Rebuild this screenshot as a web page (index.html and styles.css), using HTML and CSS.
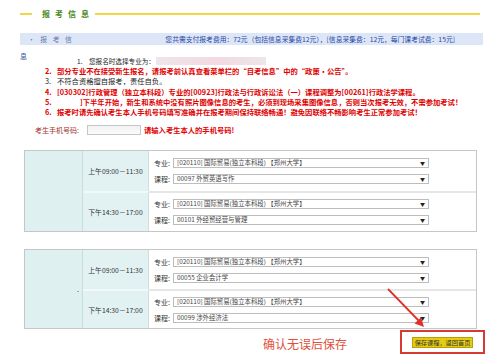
FILE: index.html
```html
<!DOCTYPE html>
<html lang="zh-CN">
<head>
<meta charset="utf-8">
<title>报考信息</title>
<link rel="stylesheet" href="styles.css">
</head>
<body>
<div class="page">
  <div class="head">
    <span class="rule short"></span>
    <span class="title">报考信息</span>
    <span class="rule long"></span>
  </div>

  <div class="bar">
    <span class="bar-left">· 报 考 信</span>
    <span class="bar-right">您共需支付报考费用：72元（包括信息采集费12元），[信息采集费：12元，每门课考试费：15元]</span>
  </div>

  <div class="notice">
    <div class="notice-tail">息</div>
    <div class="list">
      <div class="item first"><span class="num">1.</span><span>您报名时选择专业为：</span><span class="blur"></span></div>
      <div class="item red"><span class="num">2.</span><span>部分专业不在接受新生报名，请报考前认真查看菜单栏的“自考信息”中的“政策・公告”。</span></div>
      <div class="item"><span class="num">3.</span><span>不符合资格擅自报考，责任自负。</span></div>
      <div class="item red"><span class="num">4.</span><span>[030302]行政管理（独立本科段）专业的[00923]行政法与行政诉讼法（一）课程调整为[00261]行政法学课程。</span></div>
      <div class="item red"><span class="num">5.</span><span class="gap"></span><span>]下半年开始，新生和系统中没有照片图像信息的考生，必须到现场采集图像信息，否则当次报考无效，不需参加考试！</span></div>
      <div class="item red"><span class="num">6.</span><span>报考时请先确认考生本人手机号码填写准确并在报考期间保持联络畅通！避免因联络不畅影响考生正常参加考试！</span></div>
    </div>
  </div>

  <div class="phone">
    <span class="phone-label">考生手机号码:</span>
    <span class="phone-input"></span>
    <span class="phone-hint">请输入考生本人的手机号码!</span>
  </div>

  <div class="exam">
    <div class="c-blank"></div>
    <div class="c-time">上午09:00－11:30</div>
    <div class="c-pick">
      <div class="pick"><span class="lab">专业:</span><div class="sel"><span>[020110] 国际贸易(独立本科段) 【郑州大学】</span><i>▼</i></div></div>
      <div class="pick"><span class="lab">课程:</span><div class="sel"><span>00097 外贸英语写作</span><i>▼</i></div></div>
    </div>
    <div class="c-time lower">下午14:30－17:00</div>
    <div class="c-pick lower">
      <div class="pick"><span class="lab">专业:</span><div class="sel"><span>[020110] 国际贸易(独立本科段) 【郑州大学】</span><i>▼</i></div></div>
      <div class="pick"><span class="lab">课程:</span><div class="sel"><span>00101 外经贸经营与管理</span><i>▼</i></div></div>
    </div>
  </div>

  <div class="exam second">
    <div class="c-blank"><span class="dot">.</span></div>
    <div class="c-time">上午09:00－11:30</div>
    <div class="c-pick">
      <div class="pick"><span class="lab">专业:</span><div class="sel"><span>[020110] 国际贸易(独立本科段) 【郑州大学】</span><i>▼</i></div></div>
      <div class="pick"><span class="lab">课程:</span><div class="sel"><span>00055 企业会计学</span><i>▼</i></div></div>
    </div>
    <div class="c-time lower">下午14:30－17:00</div>
    <div class="c-pick lower">
      <div class="pick"><span class="lab">专业:</span><div class="sel"><span>[020110] 国际贸易(独立本科段) 【郑州大学】</span><i>▼</i></div></div>
      <div class="pick"><span class="lab">课程:</span><div class="sel"><span>00099 涉外经济法</span><i>▼</i></div></div>
    </div>
  </div>

  <div class="bottom">
    <span class="confirm">确认无误后保存</span>
    <div class="box"><span class="btn">保存课程，返回首页</span></div>
  </div>

  <svg class="arrow" width="500" height="359" viewBox="0 0 500 359">
    <line x1="388" y1="289" x2="419" y2="321" stroke="#e0302a" stroke-width="1.8"/>
    <polygon points="424,327 414.6,323.4 421,317.2" fill="#e0302a"/>
  </svg>
</div>
</body>
</html>
```

FILE: styles.css
```css
* { box-sizing: border-box; }

html, body {
  margin: 0;
  padding: 0;
  background: #ffffff;
}

body {
  font-family: "Noto Sans CJK SC", "Noto Sans", sans-serif;
  font-size: 7px;
  color: #222;
}

.page {
  position: relative;
  width: 500px;
  height: 359px;
  overflow: hidden;
}

/* header */
.head {
  display: flex;
  align-items: center;
  height: 27px;
  padding-left: 20px;
}
.rule {
  height: 2px;
  background: #f1d64c;
}
.short {
  width: 12px;
  margin-right: 10px;
}
.title {
  width: 53px;
  font-size: 8px;
  font-weight: bold;
  letter-spacing: 5px;
  color: #4a8a22;
  line-height: 10px;
}
.long {
  width: 385px;
}

/* blue info bar */
.bar {
  margin: 6px 17px 0 20px;
  height: 12px;
  background: #dde6f7;
  display: flex;
  align-items: center;
  justify-content: space-between;
  padding: 0 28px 0 8px;
  line-height: 12px;
  font-size: 6.8px;
  white-space: nowrap;
}
.bar-left {
  color: #6a7aa6;
  letter-spacing: 2px;
}
.bar-right {
  color: #2547a6;
}

/* notices */
.notice {
  display: flex;
  padding-left: 20px;
}
.notice-tail {
  width: 25px;
  margin-top: 7px;
  line-height: 9px;
  color: #3552a0;
  font-size: 7px;
}
.list {
  padding-top: 11px;
}
.item {
  display: flex;
  align-items: center;
  height: 10.2px;
  line-height: 10.2px;
  font-size: 7.3px;
  white-space: nowrap;
  color: #222;
}
.item.first {
  padding-left: 32px;
  font-size: 6.6px;
}
.num {
  width: 12px;
  flex: none;
}
.red {
  color: #e00000;
  font-weight: bold;
}
.gap {
  width: 23px;
}
.blur {
  width: 110px;
  height: 8px;
  margin-left: 1px;
  background: linear-gradient(90deg, #ede6ea, #f3d9e2 55%, #ebe6ea);
}

/* phone row */
.phone {
  display: flex;
  align-items: center;
  margin-top: 7px;
  height: 11px;
  padding-left: 35px;
  white-space: nowrap;
}
.phone-label {
  width: 52px;
  color: #a3302a;
  font-size: 7px;
}
.phone-input {
  width: 54px;
  height: 10px;
  border: 1px solid #c6c6c6;
  background: linear-gradient(180deg, #f2f2f2, #fafafa);
}
.phone-hint {
  margin-left: 3px;
  color: #e00000;
  font-weight: bold;
  font-size: 7.3px;
}

/* exam tables */
.exam {
  margin: 15px 0 0 24px;
  width: 453px;
  height: 82px;
  border: 1px solid #c6c6c6;
  display: grid;
  grid-template-columns: 58px 66px 1fr;
  grid-template-rows: 1fr 1fr;
}
.exam.second {
  margin-top: 17px;
  height: 80px;
}
.c-blank {
  grid-row: 1 / 3;
  grid-column: 1;
  background: #dff0f1;
  border-right: 1px solid #c8dcdc;
  display: flex;
  align-items: center;
  justify-content: flex-end;
  padding-right: 3px;
}
.dot {
  font-size: 7px;
  line-height: 7px;
  color: #333;
}
.c-time {
  background: #e2f2f3;
  display: flex;
  align-items: center;
  justify-content: center;
  color: #333;
  font-size: 6.8px;
  white-space: nowrap;
  border-right: 1px solid #cfdede;
}
.c-time.lower {
  border-top: 2px solid #f1f8f8;
}
.c-pick {
  display: flex;
  flex-direction: column;
  justify-content: center;
  gap: 6px;
  padding-left: 5px;
  background: #ffffff;
}
.c-pick.lower {
  border-top: 2px solid #e6e6e6;
}
.pick {
  display: flex;
  align-items: center;
  height: 10px;
}
.lab {
  width: 19px;
  color: #333;
  font-size: 7px;
  white-space: nowrap;
}
.sel {
  width: 256px;
  height: 10px;
  border: 1px solid #bdbdbd;
  display: flex;
  align-items: center;
  justify-content: space-between;
  padding: 0 3px;
  font-size: 6.4px;
  line-height: 8px;
  color: #444;
  background: #fff;
  white-space: nowrap;
}
.sel i {
  font-style: normal;
  font-size: 5px;
  color: #222;
}

/* bottom */
.bottom {
  display: flex;
  align-items: center;
  margin-top: 1px;
  height: 24px;
}
.confirm {
  margin-left: 263px;
  padding-top: 3px;
  font-size: 12px;
  line-height: 20px;
  color: #e0503c;
  white-space: nowrap;
}
.box {
  margin-left: auto;
  margin-right: 15px;
  width: 85px;
  height: 24px;
  border: 2px solid #d63a32;
  display: flex;
  align-items: center;
  justify-content: center;
}
.btn {
  background: #e6cc10;
  height: 11px;
  padding: 0 2px;
  font-size: 6.2px;
  line-height: 9px;
  color: #333;
  white-space: nowrap;
  border: 1px solid #b8a000;
}

.arrow {
  position: absolute;
  left: 0;
  top: 0;
  pointer-events: none;
}
```
